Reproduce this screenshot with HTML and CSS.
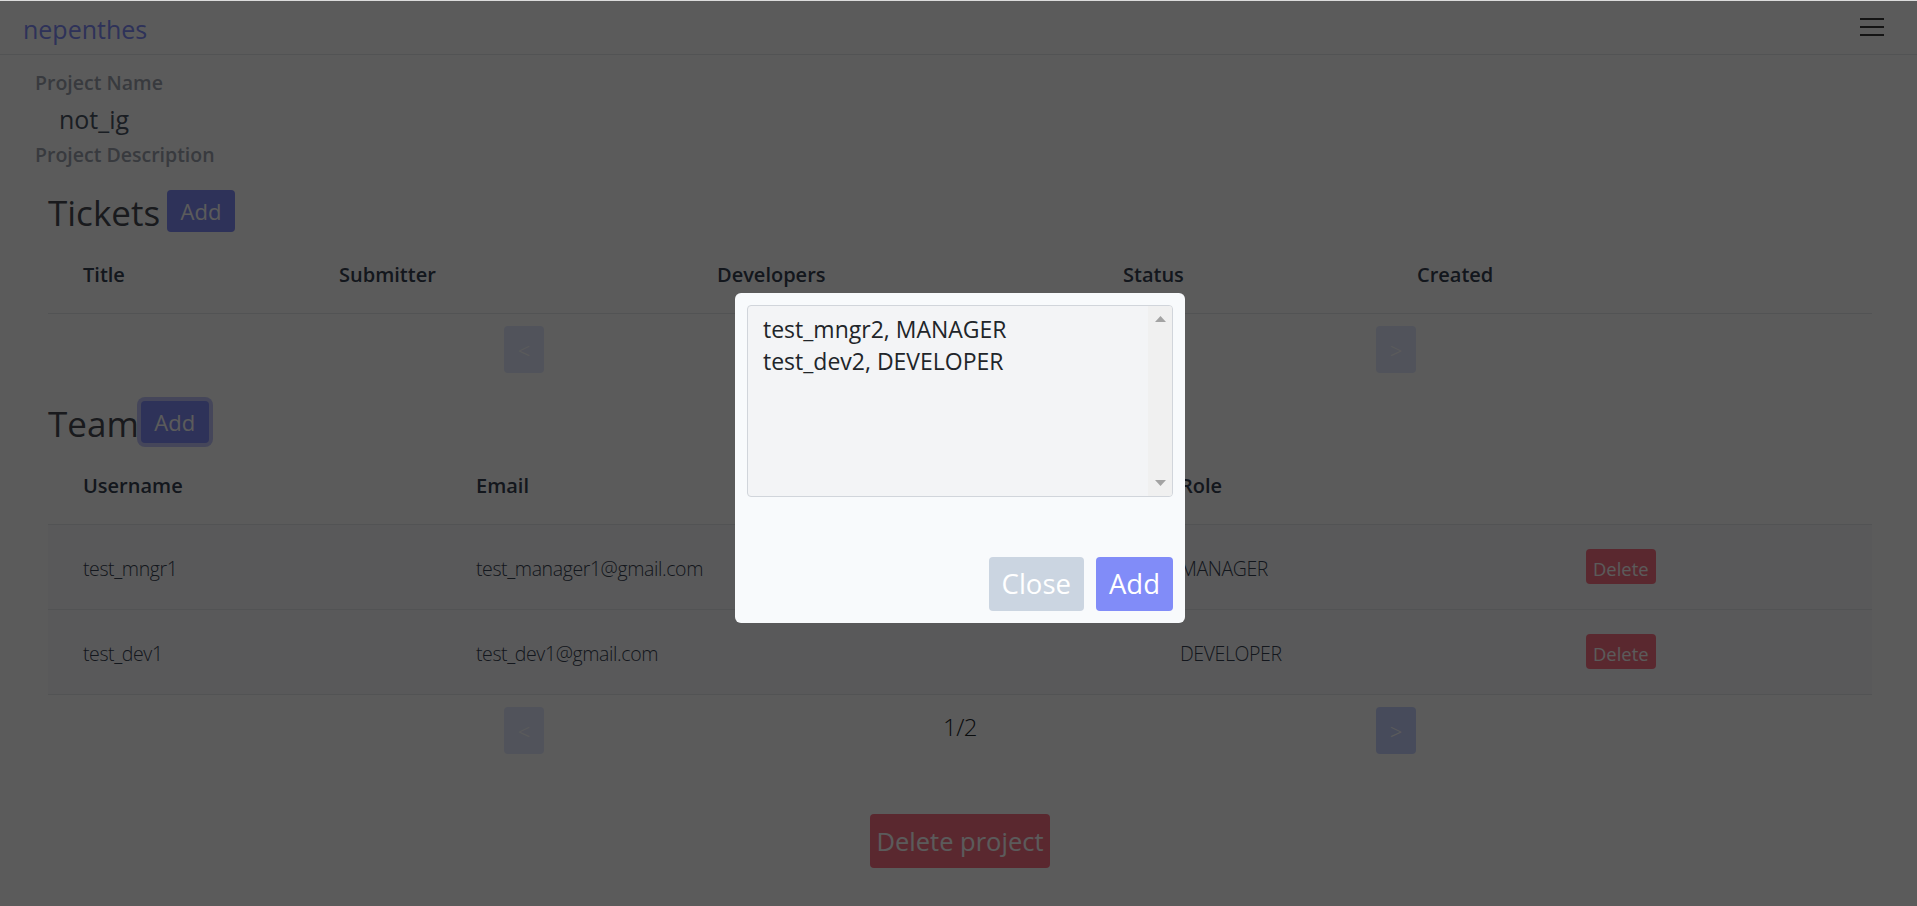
FILE: index.html
```html
<!DOCTYPE html>
<html lang="en">
<head>
<meta charset="utf-8">
<title>nepenthes – not_ig</title>
<link rel="stylesheet" href="styles.css">
</head>
<body>
<header class="navbar">
  <a class="brand" href="#">nepenthes</a>
  <button class="toggler" aria-label="Toggle navigation">
    <svg width="24" height="20" viewBox="0 0 24 20"><path d="M0 2h24M0 10h24M0 18h24" stroke="currentColor" stroke-width="2" fill="none"/></svg>
  </button>
</header>

<main class="page">
  <div class="info">
    <div class="label">Project Name</div>
    <div class="value">not_ig</div>
    <div class="label label-desc">Project Description</div>
  </div>

  <section class="section section-tickets">
    <div class="section-head">
      <h3>Tickets</h3>
      <button class="btn btn-add">Add</button>
    </div>
    <table class="table">
      <colgroup>
        <col class="tc-title"><col class="tc-sub"><col class="tc-dev"><col class="tc-status"><col class="tc-created">
      </colgroup>
      <thead>
        <tr><th>Title</th><th>Submitter</th><th>Developers</th><th>Status</th><th>Created</th></tr>
      </thead>
      <tbody></tbody>
    </table>
    <div class="pager">
      <button class="page-btn" disabled>&lt;</button>
      <span class="page-count"></span>
      <button class="page-btn" disabled>&gt;</button>
    </div>
  </section>

  <section class="section section-team">
    <div class="section-head">
      <h3>Team</h3>
      <button class="btn btn-add is-focused">Add</button>
    </div>
    <table class="table">
      <colgroup>
        <col class="mc-user"><col class="mc-email"><col class="mc-role"><col class="mc-act">
      </colgroup>
      <thead>
        <tr><th>Username</th><th>Email</th><th>Role</th><th></th></tr>
      </thead>
      <tbody>
        <tr><td>test_mngr1</td><td>test_manager1@gmail.com</td><td>MANAGER</td><td class="actions"><button class="btn btn-delete">Delete</button></td></tr>
        <tr><td>test_dev1</td><td>test_dev1@gmail.com</td><td>DEVELOPER</td><td class="actions"><button class="btn btn-delete">Delete</button></td></tr>
      </tbody>
    </table>
    <div class="pager">
      <button class="page-btn" disabled>&lt;</button>
      <span class="page-count">1/2</span>
      <button class="page-btn">&gt;</button>
    </div>
  </section>

  <div class="danger-zone">
    <button class="btn btn-danger-lg">Delete project</button>
  </div>
</main>

<div class="backdrop">
  <div class="modal" role="dialog">
    <div class="listbox">
      <div class="options">
        <div class="option">test_mngr2, MANAGER</div>
        <div class="option">test_dev2, DEVELOPER</div>
      </div>
      <div class="scrollbar">
        <svg width="11" height="6" viewBox="0 0 11 6"><path d="M0 6L5.5 0L11 6Z" fill="#a3a3a3"/></svg>
        <svg width="11" height="6" viewBox="0 0 11 6"><path d="M0 0L11 0L5.5 6Z" fill="#a3a3a3"/></svg>
      </div>
    </div>
    <div class="modal-footer">
      <button class="btn btn-lg btn-close">Close</button>
      <button class="btn btn-lg btn-primary">Add</button>
    </div>
  </div>
</div>
</body>
</html>
```

FILE: styles.css
```css
* { box-sizing: border-box; }

html, body { height: 100%; }

body {
  margin: 0;
  border-top: 1px solid #dcdcdc;
  background: #ffffff;
  color: #212529;
  font-family: "Open Sans", "Noto Sans", "DejaVu Sans", sans-serif;
  overflow: hidden;
}

/* navbar */
.navbar {
  display: flex;
  justify-content: space-between;
  align-items: flex-start;
  height: 54px;
  padding: 10px 33px 0 23px;
  border-bottom: 1px solid #e5e7eb;
}
.brand {
  font-size: 25px;
  line-height: 37px;
  color: #818cf8;
  text-decoration: none;
}
.toggler {
  margin-top: 6px;
  padding: 0;
  border: 0;
  background: none;
  color: #383838;
  line-height: 0;
}

/* page */
.page {
  padding: 0 45px 0 35px;
}
.info {
  padding-top: 13px;
}
.label {
  font-size: 19.5px;
  font-weight: 600;
  line-height: 30px;
  color: #9ca3af;
}
.value {
  margin: 3px 0 2px 24px;
  font-size: 25px;
  line-height: 37px;
  color: #4b5563;
}

.section {
  margin-left: 13px;
}
.section-tickets { margin-top: 20px; }
.section-team { margin-top: 28px; }

.section-head {
  display: flex;
  align-items: flex-start;
  gap: 7px;
}
.section-team .section-head {
  gap: 2px;
}
.section-head h3 {
  margin: 2px 0 0;
  font-size: 35px;
  line-height: 42px;
  font-weight: 500;
  color: #464a52;
}

.btn {
  border: 0;
  border-radius: 4px;
  color: #ffffff;
  font-family: inherit;
  cursor: pointer;
}
.btn-add {
  height: 42px;
  padding: 4.5px 13.5px;
  font-size: 22px;
  line-height: 33px;
  background: #818cf8;
}
.btn-add.is-focused {
  box-shadow: 0 0 0 4px rgba(129, 140, 248, 0.5);
}

/* tables */
.table {
  width: 100%;
  margin-top: 3px;
  border-collapse: collapse;
  table-layout: fixed;
}
.tc-title { width: 256px; }
.tc-sub { width: 378px; }
.tc-dev { width: 406px; }
.tc-status { width: 294px; }
.tc-created { width: 490px; }
.mc-user { width: 393px; }
.mc-email { width: 704px; }
.mc-role { width: 406px; }
.mc-act { width: 321px; }

.table th {
  padding: 23px 12px 23px 35px;
  border-bottom: 1px solid #e5e7eb;
  text-align: left;
  vertical-align: top;
  font-size: 20px;
  font-weight: 600;
  line-height: 30px;
  color: #374151;
}
.table tbody tr {
  background: #f9fafb;
}
.table td {
  padding: 29px 12px 25px 35px;
  border-bottom: 1px solid #e5e7eb;
  vertical-align: top;
  font-size: 19.5px;
  font-weight: 300;
  line-height: 30px;
  letter-spacing: -0.4px;
  color: #374151;
}
.table td.actions {
  padding-top: 24px;
  line-height: 35px;
}
.btn-delete {
  display: inline-block;
  vertical-align: top;
  height: 35px;
  padding: 6px 7px 2px;
  font-size: 18.4px;
  line-height: 27px;
  letter-spacing: 0;
  background: #fb7185;
}

/* pagination */
.pager {
  display: flex;
  justify-content: space-between;
  align-items: flex-start;
  width: 912px;
  margin: 12px auto 0;
}
.page-btn {
  display: flex;
  align-items: center;
  justify-content: center;
  width: 40px;
  height: 47px;
  padding: 0;
  border: 0;
  border-radius: 4px;
  background: #c7d2fe;
  color: #ffffff;
  font-family: inherit;
  font-size: 22px;
  font-weight: 300;
}
.page-btn:disabled { opacity: 0.5; }
.page-count {
  margin-top: 2px;
  font-size: 24px;
  font-weight: 300;
  line-height: 36px;
  letter-spacing: -0.5px;
  color: #212529;
}

.danger-zone {
  display: flex;
  justify-content: center;
  margin: 60px 0 0 13px;
}
.btn-danger-lg {
  height: 54px;
  padding: 8px 6px;
  font-size: 25.5px;
  line-height: 38px;
  background: #fb7185;
}

/* modal */
.backdrop {
  position: fixed;
  top: 1px;
  left: 0;
  right: 0;
  bottom: 0;
  display: flex;
  justify-content: center;
  align-items: flex-start;
  padding: 292px 0 0 3px;
  background: rgba(0, 0, 0, 0.643);
}
.modal {
  width: 450px;
  padding: 12px;
  border-radius: 6px;
  background: #f8fafc;
}
.listbox {
  display: flex;
  height: 192px;
  border: 1px solid #d1d5db;
  border-radius: 4px;
  background: #f3f4f6;
  overflow: hidden;
}
.options {
  flex: 1;
  padding: 7px 15px;
  font-size: 23px;
  line-height: 32px;
  color: #212529;
}
.scrollbar {
  display: flex;
  flex-direction: column;
  justify-content: space-between;
  align-items: center;
  width: 24px;
  padding: 10px 0;
  background: #f0f0f0;
}
.modal-footer {
  display: flex;
  justify-content: flex-end;
  gap: 12px;
  margin-top: 60px;
}
.btn-lg {
  height: 54px;
  padding: 0 13px;
  font-size: 27.5px;
  line-height: 54px;
}
.btn-close { background: #cbd5e1; }
.btn-primary { background: #818cf8; }
```
